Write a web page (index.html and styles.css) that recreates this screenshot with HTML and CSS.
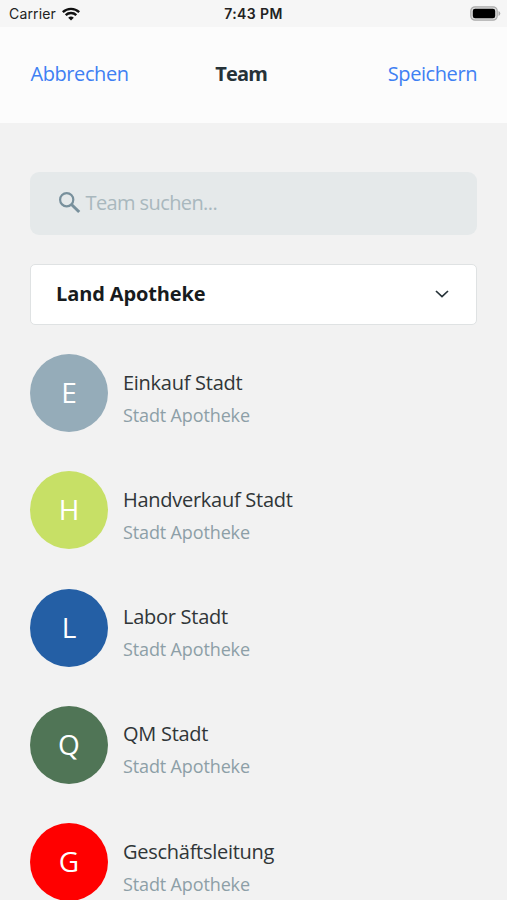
FILE: index.html
```html
<!DOCTYPE html>
<html lang="de">
<head><meta charset="utf-8"><title>Team</title><link rel="stylesheet" href="styles.css"></head>
<body>
<div class="status">
<div class="carrier"><span>Carrier</span><svg width="18" height="14" viewBox="0 0 18 14"><path d="M.8 5.2a11.8 11.8 0 0 1 16.4 0M3.7 8.2a7.6 7.6 0 0 1 10.6 0" fill="none" stroke="#111" stroke-width="2.4"/><path d="M9 13.5 6.2 10.7a4.1 4.1 0 0 1 5.6 0z" fill="#111"/></svg></div>
<div class="time">7:43 PM</div>
<svg class="battery" width="31" height="15" viewBox="0 0 31 15"><rect x=".8" y=".8" width="26.4" height="13.4" rx="4.2" fill="#ddd" stroke="#aaa" stroke-width="1.2"/><rect x="2.8" y="2.8" width="22.4" height="9.4" rx="2.3" fill="#000"/><path d="M28.5 5q1.8.8 1.8 2.5t-1.8 2.5z" fill="#aaa"/></svg>
</div>
<header class="nav"><a class="cancel">Abbrechen</a><h1>Team</h1><a class="save">Speichern</a></header>
<main>
<div class="search"><svg width="24" height="24" viewBox="0 0 24 24"><circle cx="8.7" cy="8.7" r="6.6" fill="none" stroke="#78909c" stroke-width="2.2"/><path d="m13.5 13.5 7.7 7.5" stroke="#78909c" stroke-width="3"/></svg><span>Team suchen...</span></div>
<div class="select"><span>Land Apotheke</span><svg width="14" height="8" viewBox="0 0 14 8"><path d="m1 1 6 5.7L13 1" fill="none" stroke="#263238" stroke-width="1.7"/></svg></div>
<ul class="teams">
<li><div class="avatar blue-grey">E</div><div><div class="name">Einkauf Stadt</div><div class="sub">Stadt Apotheke</div></div></li>
<li><div class="avatar lime">H</div><div><div class="name">Handverkauf Stadt</div><div class="sub">Stadt Apotheke</div></div></li>
<li><div class="avatar blue">L</div><div><div class="name">Labor Stadt</div><div class="sub">Stadt Apotheke</div></div></li>
<li><div class="avatar green">Q</div><div><div class="name">QM Stadt</div><div class="sub">Stadt Apotheke</div></div></li>
<li><div class="avatar red">G</div><div><div class="name">Geschäftsleitung</div><div class="sub">Stadt Apotheke</div></div></li>
</ul>
</main>
</body>
</html>
```
FILE: styles.css
```css
* { box-sizing: border-box; }
body { margin: 0; height: 900px; overflow: hidden; background: #f2f2f2; font-family: "Open Sans", sans-serif; color: #263238; }
svg { display: block; flex: none; }
.status { height: 27px; background: #f6f6f6; display: grid; grid-template-columns: 1fr auto 1fr; align-items: center; padding: 0 6px 0 9px; font: 14px/27px Inter, sans-serif; color: #222; }
.carrier { display: flex; align-items: center; gap: 6px; }
.carrier span { letter-spacing: .15px; }
.time { margin-right: 3px; font-weight: 600; letter-spacing: .4px; }
.battery { justify-self: end; }
.nav { height: 96px; background: #fcfcfc; display: grid; grid-template-columns: 1fr auto 1fr; align-items: center; padding: 0 30px 2px 30.5px; font-size: 20px; line-height: 28px; white-space: nowrap; }
.nav a { color: #3f80f3; letter-spacing: -.42px; }
.nav .save { justify-self: end; }
.nav h1 { margin: 0 25px 0 0; font-size: 20px; letter-spacing: -.8px; }
main { padding: 49px 30px 0; }
.search { height: 63px; border-radius: 9px; background: #e5e9ea; display: flex; align-items: center; gap: 4px; padding: 0 0 2px 27.5px; font-size: 20px; color: #a9b8be; letter-spacing: -.6px; }
.select { height: 61px; margin-top: 29px; border: 1.5px solid #dfe2e3; border-radius: 5px; background: #fff; display: flex; align-items: center; justify-content: space-between; padding: 0 27px 3px 25px; font-size: 20px; font-weight: 700; letter-spacing: -.12px; color: #171b1d; }
.select svg { margin-top: 2px; }
.teams { list-style: none; margin: 29px 0 0; padding: 0; }
.teams li { height: 78px; margin-bottom: 39.3px; display: flex; gap: 15px; white-space: nowrap; }
.avatar { width: 78px; height: 78px; flex: none; border-radius: 50%; color: #fff; font-size: 28px; font-weight: 400; line-height: 76px; text-align: center; }
.blue-grey { background: #95acb9; }
.lime { background: #c7e066; }
.blue { background: #245fa5; }
.green { background: #507556; }
.red { background: #ff0000; }
.name { margin-top: 13.5px; font-size: 20px; line-height: 30px; letter-spacing: -.27px; color: #303638; }
.sub { margin-top: 4px; font-size: 18px; line-height: 26px; letter-spacing: -.13px; color: #8d9fa7; }
```
